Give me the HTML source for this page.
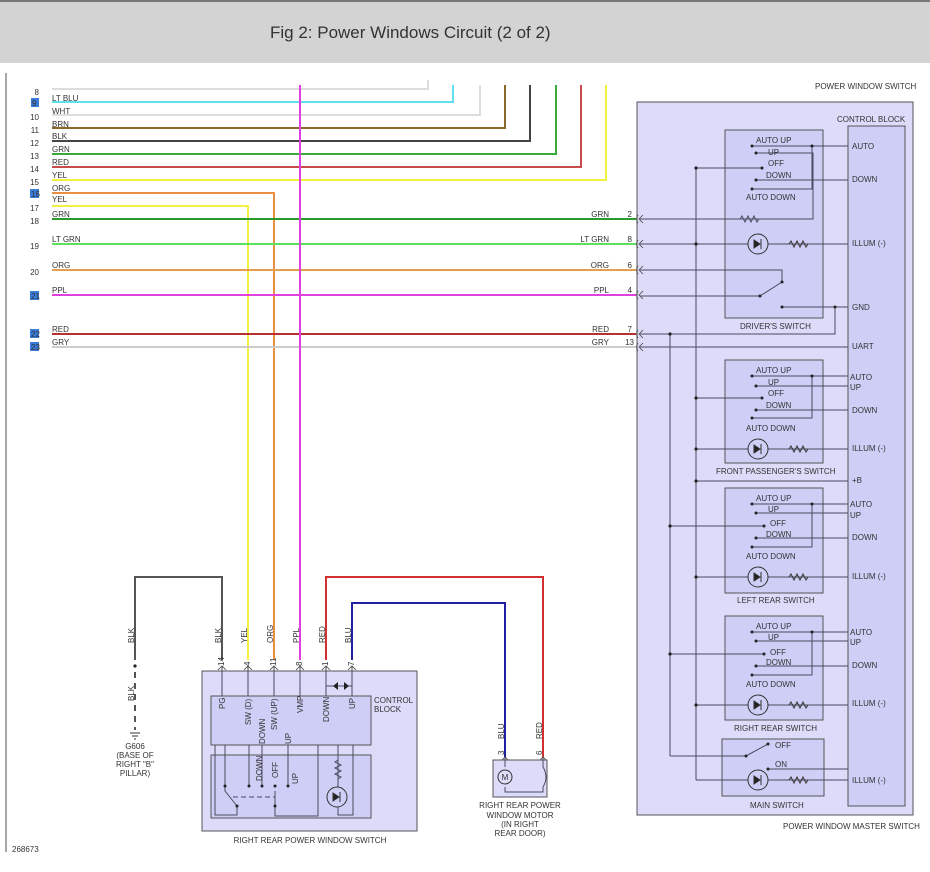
<!DOCTYPE html>
<html><head><meta charset="utf-8"><style>
html,body{margin:0;padding:0;background:#fff;}
body{width:930px;height:872px;overflow:hidden;position:relative;font-family:"Liberation Sans",sans-serif;}
.hd{position:absolute;left:0;top:0;width:930px;height:63px;background:#d3d3d3;border-top:2px solid #777;box-sizing:border-box;}
.hd span{position:absolute;left:270px;top:21px;font-size:17px;color:#333;}
svg{position:absolute;left:0;top:0;}
text{font-family:"Liberation Sans",sans-serif;font-size:8px;fill:#333;}
</style></head><body>
<div class="hd"><span>Fig 2: Power Windows Circuit (2 of 2)</span></div>
<svg width="930" height="872" viewBox="0 0 930 872">
<line x1="6" y1="73" x2="6" y2="852" stroke="#888" stroke-width="1.5"/>
<text x="12" y="852" font-size="7">268673</text>
<!-- master switch box -->
<rect x="637" y="102" width="276" height="713" fill="#dcdcfa" stroke="#555" stroke-width="1"/>
<rect x="848" y="126" width="57" height="680" fill="#ceceF6" stroke="#555"/>
<rect x="725" y="130" width="98" height="188" fill="#ceceF6" stroke="#555"/>
<rect x="725" y="360" width="98" height="103" fill="#ceceF6" stroke="#555"/>
<rect x="725" y="488" width="98" height="105" fill="#ceceF6" stroke="#555"/>
<rect x="725" y="616" width="98" height="104" fill="#ceceF6" stroke="#555"/>
<rect x="722" y="739" width="102" height="57" fill="#ceceF6" stroke="#555"/>
<text x="815" y="89" font-size="7">POWER WINDOW SWITCH</text>
<text x="837" y="122">CONTROL BLOCK</text>
<text x="783" y="829">POWER WINDOW MASTER SWITCH</text>

<!-- left wires -->
<g fill="none" stroke-width="2">
<path d="M52,89 H428 V80" stroke="#ddd"/>
<path d="M52,102 H453 V85" stroke="#5ee0ee"/>
<path d="M52,115 H480 V85" stroke="#ddd"/>
<path d="M52,128 H505 V85" stroke="#8a6a2a"/>
<path d="M52,141 H530 V85" stroke="#444"/>
<path d="M52,154 H556 V85" stroke="#3aa83a"/>
<path d="M52,167 H581 V85" stroke="#c84a4a"/>
<path d="M52,180 H606 V85" stroke="#f4f040"/>
<path d="M52,193 H274 V660" stroke="#e89040"/>
<path d="M52,206 H248 V660" stroke="#f4f040"/>
<path d="M52,219 H636" stroke="#2a9a2a"/>
<path d="M52,244 H636" stroke="#5ee05e"/>
<path d="M52,270 H636" stroke="#e0a050"/>
<path d="M52,295 H636" stroke="#e040e0"/>
<path d="M52,334 H636" stroke="#b83030"/>
<path d="M52,347 H636" stroke="#ccc"/>
<path d="M300,85 V660" stroke="#e040e0"/>
<path d="M135,660 V577 H222 V660" stroke="#555"/>
<path d="M326,660 V577 H543 V757" stroke="#d03030"/>
<path d="M352,660 V603 H505 V757" stroke="#2020a0"/>
</g>
<g text-anchor="end" font-size="7">
<text x="39" y="95">8</text>
<text x="39" y="120">10</text><text x="39" y="133">11</text><text x="39" y="146">12</text><text x="39" y="159">13</text><text x="39" y="172">14</text><text x="39" y="185">15</text><text x="39" y="211">17</text><text x="39" y="224">18</text><text x="39" y="249">19</text><text x="39" y="275">20</text>
</g>
<g fill="#3a7ad8"><rect x="31" y="98" width="8" height="9"/><rect x="30" y="189" width="9" height="9"/><rect x="30" y="291" width="9" height="9"/><rect x="30" y="329" width="9" height="9"/><rect x="30" y="342" width="9" height="9"/></g>
<g font-size="7" fill="#000"><text x="32" y="106">9</text><text x="31" y="197">16</text><text x="31" y="299">21</text><text x="31" y="337">22</text><text x="31" y="350">23</text></g>
<g><text x="52" y="101">LT BLU</text><text x="52" y="114">WHT</text><text x="52" y="127">BRN</text><text x="52" y="139">BLK</text><text x="52" y="152">GRN</text><text x="52" y="165">RED</text><text x="52" y="178">YEL</text><text x="52" y="191">ORG</text><text x="52" y="202">YEL</text><text x="52" y="217">GRN</text><text x="52" y="242">LT GRN</text><text x="52" y="268">ORG</text><text x="52" y="293">PPL</text><text x="52" y="332">RED</text><text x="52" y="345">GRY</text></g>
<g text-anchor="end"><text x="609" y="217">GRN</text><text x="609" y="242">LT GRN</text><text x="609" y="268">ORG</text><text x="609" y="293">PPL</text><text x="609" y="332">RED</text><text x="609" y="345">GRY</text>
<text x="632" y="217" font-size="7">2</text><text x="632" y="242" font-size="7">8</text><text x="632" y="268" font-size="7">6</text><text x="632" y="293" font-size="7">4</text><text x="632" y="332" font-size="7">7</text><text x="634" y="345" font-size="7">13</text></g>
<g fill="none" stroke="#444" stroke-width="0.8">
<path d="M638,215 q-3,4 0,8 M643,215 l-4,4 4,4"/><path d="M638,240 q-3,4 0,8 M643,240 l-4,4 4,4"/><path d="M638,266 q-3,4 0,8 M643,266 l-4,4 4,4"/><path d="M638,291 q-3,4 0,8 M643,291 l-4,4 4,4"/><path d="M638,330 q-3,4 0,8 M643,330 l-4,4 4,4"/><path d="M638,343 q-3,4 0,8 M643,343 l-4,4 4,4"/>
</g>

<!-- internal lines master -->
<g fill="none" stroke="#4a4a60" stroke-width="1">
<path d="M696,168 V780"/><path d="M670,334 V756"/>
<path d="M640,219 H813 V153 H756"/><path d="M640,244 H848"/><path d="M640,270 H782 V282"/><path d="M640,296 H760 L782,282"/>
<path d="M640,334 H835 V307 H782"/><path d="M835,307 H848"/><path d="M640,347 H848"/>
<path d="M752,146 H848"/><path d="M812,146 V189 H752"/><path d="M696,168 H762"/><path d="M756,180 H848"/>
<!-- front pass -->
<path d="M752,376 H848"/><path d="M756,386 H848"/><path d="M812,376 V418 H752"/><path d="M696,398 H762"/><path d="M756,410 H848"/><path d="M696,449 H848"/>
<path d="M696,481 H848"/>
<!-- left rear -->
<path d="M752,504 H848"/><path d="M756,513 H848"/><path d="M812,504 V547 H752"/><path d="M670,526 H764"/><path d="M756,538 H848"/><path d="M696,577 H848"/>
<!-- right rear -->
<path d="M752,632 H848"/><path d="M756,641 H848"/><path d="M812,632 V675 H752"/><path d="M670,654 H764"/><path d="M756,666 H848"/><path d="M696,705 H848"/>
<!-- main -->
<path d="M670,756 H746 L768,744"/><path d="M768,769 H848"/><path d="M696,780 H848"/>
</g>
<g fill="none" stroke="#333" stroke-width="1">
<path d="M740,219 l2,-3 3,6 3,-6 3,6 3,-6 3,6 2,-3" stroke="#4a4a60"/>
<path d="M789,244 l2,-3 3,6 3,-6 3,6 3,-6 3,6 2,-3"/>
<path d="M789,449 l2,-3 3,6 3,-6 3,6 3,-6 3,6 2,-3"/>
<path d="M789,577 l2,-3 3,6 3,-6 3,6 3,-6 3,6 2,-3"/>
<path d="M789,705 l2,-3 3,6 3,-6 3,6 3,-6 3,6 2,-3"/>
<path d="M789,780 l2,-3 3,6 3,-6 3,6 3,-6 3,6 2,-3"/>
</g>
<!-- LEDs -->
<g stroke="#333" stroke-width="1">
<circle cx="758" cy="244" r="10" fill="#ceceF6"/><path d="M754,240 l6,4 -6,4z M761,239 v10" fill="#222"/>
<circle cx="758" cy="449" r="10" fill="#ceceF6"/><path d="M754,445 l6,4 -6,4z M761,444 v10" fill="#222"/>
<circle cx="758" cy="577" r="10" fill="#ceceF6"/><path d="M754,573 l6,4 -6,4z M761,572 v10" fill="#222"/>
<circle cx="758" cy="705" r="10" fill="#ceceF6"/><path d="M754,701 l6,4 -6,4z M761,700 v10" fill="#222"/>
<circle cx="758" cy="780" r="10" fill="#ceceF6"/><path d="M754,776 l6,4 -6,4z M761,775 v10" fill="#222"/>
</g>
<!-- dots -->
<g fill="#222">
<circle cx="696" cy="168" r="1.6"/><circle cx="696" cy="244" r="1.6"/><circle cx="696" cy="398" r="1.6"/><circle cx="696" cy="449" r="1.6"/><circle cx="696" cy="481" r="1.6"/><circle cx="696" cy="577" r="1.6"/><circle cx="696" cy="705" r="1.6"/><circle cx="670" cy="334" r="1.6"/><circle cx="670" cy="526" r="1.6"/><circle cx="670" cy="654" r="1.6"/>
<circle cx="812" cy="146" r="1.5"/><circle cx="752" cy="146" r="1.5"/><circle cx="752" cy="189" r="1.5"/><circle cx="756" cy="153" r="1.5"/><circle cx="756" cy="180" r="1.5"/><circle cx="762" cy="168" r="1.5"/><circle cx="782" cy="282" r="1.5"/><circle cx="760" cy="296" r="1.5"/><circle cx="782" cy="307" r="1.5"/><circle cx="835" cy="307" r="1.5"/>
<circle cx="812" cy="376" r="1.5"/><circle cx="752" cy="376" r="1.5"/><circle cx="752" cy="418" r="1.5"/><circle cx="756" cy="386" r="1.5"/><circle cx="756" cy="410" r="1.5"/><circle cx="762" cy="398" r="1.5"/>
<circle cx="812" cy="504" r="1.5"/><circle cx="752" cy="504" r="1.5"/><circle cx="752" cy="547" r="1.5"/><circle cx="756" cy="513" r="1.5"/><circle cx="756" cy="538" r="1.5"/><circle cx="764" cy="526" r="1.5"/>
<circle cx="812" cy="632" r="1.5"/><circle cx="752" cy="632" r="1.5"/><circle cx="752" cy="675" r="1.5"/><circle cx="756" cy="641" r="1.5"/><circle cx="756" cy="666" r="1.5"/><circle cx="764" cy="654" r="1.5"/>
<circle cx="746" cy="756" r="1.5"/><circle cx="768" cy="744" r="1.5"/><circle cx="768" cy="769" r="1.5"/>
</g>
<!-- switch labels -->
<g>
<text x="756" y="143">AUTO UP</text><text x="768" y="155">UP</text><text x="768" y="166">OFF</text><text x="766" y="178">DOWN</text><text x="746" y="200">AUTO DOWN</text><text x="740" y="329">DRIVER'S SWITCH</text>
<text x="756" y="373">AUTO UP</text><text x="768" y="385">UP</text><text x="768" y="396">OFF</text><text x="766" y="408">DOWN</text><text x="746" y="431">AUTO DOWN</text><text x="716" y="474">FRONT PASSENGER'S SWITCH</text>
<text x="756" y="501">AUTO UP</text><text x="768" y="512">UP</text><text x="770" y="526">OFF</text><text x="766" y="537">DOWN</text><text x="746" y="559">AUTO DOWN</text><text x="737" y="603">LEFT REAR SWITCH</text>
<text x="756" y="629">AUTO UP</text><text x="768" y="640">UP</text><text x="770" y="655">OFF</text><text x="766" y="665">DOWN</text><text x="746" y="687">AUTO DOWN</text><text x="734" y="731">RIGHT REAR SWITCH</text>
<text x="775" y="748">OFF</text><text x="775" y="767">ON</text><text x="750" y="808">MAIN SWITCH</text>
<text x="852" y="149">AUTO</text><text x="852" y="182">DOWN</text><text x="852" y="246" font-size="7.5">ILLUM (-)</text><text x="852" y="310">GND</text><text x="852" y="349">UART</text>
<text x="850" y="380">AUTO</text><text x="850" y="390">UP</text><text x="852" y="413">DOWN</text><text x="852" y="451" font-size="7.5">ILLUM (-)</text><text x="852" y="483" font-size="7">+B</text>
<text x="850" y="507">AUTO</text><text x="850" y="518">UP</text><text x="852" y="540">DOWN</text><text x="852" y="579" font-size="7.5">ILLUM (-)</text>
<text x="850" y="635">AUTO</text><text x="850" y="645">UP</text><text x="852" y="668">DOWN</text><text x="852" y="706" font-size="7.5">ILLUM (-)</text><text x="852" y="783" font-size="7.5">ILLUM (-)</text>
</g>

<!-- right rear window switch -->
<rect x="202" y="671" width="215" height="160" fill="#dcdcfa" stroke="#555"/>
<rect x="211" y="696" width="160" height="49" fill="#ceceF6" stroke="#555"/>
<rect x="211" y="755" width="160" height="63" fill="#ceceF6" stroke="#555"/>
<g fill="none" stroke="#4a4a60" stroke-width="1">
<path d="M222,666 V696 M248,666 V696 M274,666 V696 M300,666 V696 M326,666 V696 M352,666 V696"/>
<path d="M326,686 H352"/>
<path d="M215,745 V815 H237 V806 L225,791 V745"/>
<path d="M249,745 V786 M262,745 V786 M288,745 V786"/>
<path d="M275,791 V816 H318 V745"/>
<path d="M338,745 V815 H353 V745"/>
<path d="M338,760 l-3,2 6,3 -6,3 6,3 -6,3 6,3 -3,2"/>
<path d="M233,797 H275" stroke-dasharray="5,3"/>
</g>
<circle cx="337" cy="797" r="10" fill="#ceceF6" stroke="#333"/><path d="M333,793 l6,4 -6,4z M340,792 v10" fill="#222" stroke="#333"/>
<path d="M338,682 l-5,4 5,4z M344,682 l5,4 -5,4z" fill="#222"/>
<g fill="#222"><circle cx="225" cy="786" r="1.5"/><circle cx="237" cy="806" r="1.5"/><circle cx="249" cy="786" r="1.5"/><circle cx="262" cy="786" r="1.5"/><circle cx="275" cy="786" r="1.5"/><circle cx="275" cy="806" r="1.5"/><circle cx="288" cy="786" r="1.5"/><circle cx="135" cy="666" r="1.6"/></g>
<path d="M135,672 V730" stroke="#555" stroke-width="2" stroke-dasharray="6,5"/>
<path d="M130,733 h10 M132,736 h6 M134,739 h2" stroke="#333"/>
<g text-anchor="middle"><text x="135" y="749">G606</text><text x="135" y="758">(BASE OF</text><text x="135" y="767">RIGHT "B"</text><text x="135" y="776">PILLAR)</text>
<text x="310" y="843">RIGHT REAR POWER WINDOW SWITCH</text>
<text x="520" y="808">RIGHT REAR POWER</text><text x="520" y="818">WINDOW MOTOR</text><text x="520" y="827">(IN RIGHT</text><text x="520" y="836">REAR DOOR)</text></g>
<text x="374" y="703">CONTROL</text><text x="374" y="712">BLOCK</text>
<g font-size="7.5">
<text transform="translate(134,643) rotate(-90)">BLK</text><text transform="translate(134,701) rotate(-90)">BLK</text>
<text transform="translate(221,643) rotate(-90)">BLK</text><text transform="translate(247,643) rotate(-90)">YEL</text><text transform="translate(273,643) rotate(-90)">ORG</text><text transform="translate(299,643) rotate(-90)">PPL</text><text transform="translate(325,643) rotate(-90)">RED</text><text transform="translate(351,643) rotate(-90)">BLU</text>
<text transform="translate(224,666) rotate(-90)">14</text><text transform="translate(250,666) rotate(-90)">4</text><text transform="translate(276,666) rotate(-90)">11</text><text transform="translate(302,666) rotate(-90)">8</text><text transform="translate(328,666) rotate(-90)">1</text><text transform="translate(354,666) rotate(-90)">7</text>
<text transform="translate(225,709) rotate(-90)">PG</text><text transform="translate(251,725) rotate(-90)">SW (D)</text><text transform="translate(277,730) rotate(-90)">SW (UP)</text><text transform="translate(303,713) rotate(-90)">VMP</text><text transform="translate(329,722) rotate(-90)">DOWN</text><text transform="translate(355,709) rotate(-90)">UP</text>
<text transform="translate(265,744) rotate(-90)">DOWN</text><text transform="translate(291,744) rotate(-90)">UP</text>
<text transform="translate(262,781) rotate(-90)">DOWN</text><text transform="translate(278,778) rotate(-90)">OFF</text><text transform="translate(298,784) rotate(-90)">UP</text>
<text transform="translate(504,739) rotate(-90)">BLU</text><text transform="translate(542,739) rotate(-90)">RED</text>
<text transform="translate(504,755) rotate(-90)">3</text><text transform="translate(542,755) rotate(-90)">6</text>
</g>
<g fill="none" stroke="#444" stroke-width="0.8"><path d="M218,670 l4,-4 4,4 M244,670 l4,-4 4,4 M270,670 l4,-4 4,4 M296,670 l4,-4 4,4 M322,670 l4,-4 4,4 M348,670 l4,-4 4,4 M501,761 l4,-4 4,4 M539,761 l4,-4 4,4"/></g>
<!-- motor -->
<rect x="493" y="760" width="54" height="37" fill="#dcdcfa" stroke="#555"/>
<g fill="none" stroke="#4a4a60"><path d="M505,757 V767 M505,787 V792 H543 V787 M543,757 V767"/><path d="M543,767 q6,10 0,20"/></g>
<circle cx="505" cy="777" r="7" fill="#dcdcfa" stroke="#333"/><text x="505" y="780" text-anchor="middle">M</text>
</svg>
</body></html>
